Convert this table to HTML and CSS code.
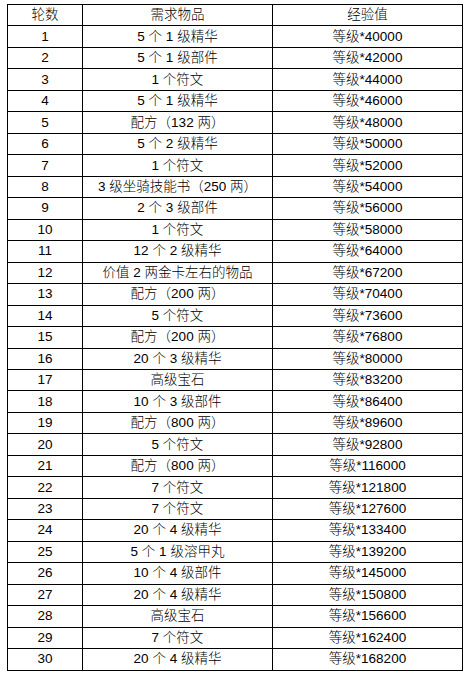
FILE: index.html
```html
<!DOCTYPE html>
<html lang="zh">
<head>
<meta charset="utf-8">
<link rel="stylesheet" href="styles.css">
</head>
<body>
<table class="tbl">
<colgroup><col class="c1"><col class="c2"><col class="c3"></colgroup>
<tr><td>轮数</td><td>需求物品</td><td>经验值</td></tr>
<tr><td>1</td><td>5 个 1 级精华</td><td>等级*40000</td></tr>
<tr><td>2</td><td>5 个 1 级部件</td><td>等级*42000</td></tr>
<tr><td>3</td><td>1 个符文</td><td>等级*44000</td></tr>
<tr><td>4</td><td>5 个 1 级精华</td><td>等级*46000</td></tr>
<tr><td>5</td><td>配方（132 两）</td><td>等级*48000</td></tr>
<tr><td>6</td><td>5 个 2 级精华</td><td>等级*50000</td></tr>
<tr><td>7</td><td>1 个符文</td><td>等级*52000</td></tr>
<tr><td>8</td><td>3 级坐骑技能书（250 两）</td><td>等级*54000</td></tr>
<tr><td>9</td><td>2 个 3 级部件</td><td>等级*56000</td></tr>
<tr><td>10</td><td>1 个符文</td><td>等级*58000</td></tr>
<tr><td>11</td><td>12 个 2 级精华</td><td>等级*64000</td></tr>
<tr><td>12</td><td>价值 2 两金卡左右的物品</td><td>等级*67200</td></tr>
<tr><td>13</td><td>配方（200 两）</td><td>等级*70400</td></tr>
<tr><td>14</td><td>5 个符文</td><td>等级*73600</td></tr>
<tr><td>15</td><td>配方（200 两）</td><td>等级*76800</td></tr>
<tr><td>16</td><td>20 个 3 级精华</td><td>等级*80000</td></tr>
<tr><td>17</td><td>高级宝石</td><td>等级*83200</td></tr>
<tr><td>18</td><td>10 个 3 级部件</td><td>等级*86400</td></tr>
<tr><td>19</td><td>配方（800 两）</td><td>等级*89600</td></tr>
<tr><td>20</td><td>5 个符文</td><td>等级*92800</td></tr>
<tr><td>21</td><td>配方（800 两）</td><td>等级*116000</td></tr>
<tr><td>22</td><td>7 个符文</td><td>等级*121800</td></tr>
<tr><td>23</td><td>7 个符文</td><td>等级*127600</td></tr>
<tr><td>24</td><td>20 个 4 级精华</td><td>等级*133400</td></tr>
<tr><td>25</td><td>5 个 1 级溶甲丸</td><td>等级*139200</td></tr>
<tr><td>26</td><td>10 个 4 级部件</td><td>等级*145000</td></tr>
<tr><td>27</td><td>20 个 4 级精华</td><td>等级*150800</td></tr>
<tr><td>28</td><td>高级宝石</td><td>等级*156600</td></tr>
<tr><td>29</td><td>7 个符文</td><td>等级*162400</td></tr>
<tr><td>30</td><td>20 个 4 级精华</td><td>等级*168200</td></tr>
</table>
</body>
</html>
```
FILE: styles.css
```css
html, body {
  margin: 0;
  padding: 0;
  background: #ffffff;
}
body {
  padding: 4px 0 0 7px;
  font-family: "Liberation Sans", "Noto Sans CJK SC", sans-serif;
  font-size: 13.5px;
  font-weight: 300;
  color: #000;
}
.tbl {
  border-collapse: collapse;
  table-layout: fixed;
  width: 455px;
}
.c1 { width: 75px; }
.c2 { width: 190px; }
.c3 { width: 190px; }
.tbl td {
  border: 1px solid #000;
  height: 20.48px;
  padding: 0;
  text-align: center;
  vertical-align: middle;
  line-height: 14px;
  white-space: pre;
}
```
